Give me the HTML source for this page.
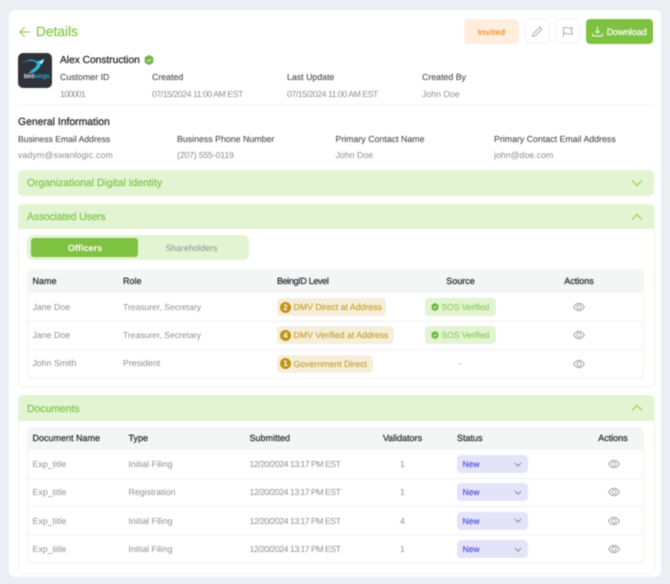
<!DOCTYPE html>
<html><head><meta charset="utf-8">
<style>
html,body{margin:0;padding:0;background:#ebeef3}
#p{position:relative;width:670px;height:584px;overflow:hidden;background:#ebeef3;font-family:"Liberation Sans",Arial,sans-serif;filter:blur(.4px);text-rendering:geometricPrecision}
#p div,#p span.a,#p svg.a{position:absolute}
.t{position:absolute;white-space:nowrap;line-height:14px;height:14px;font-size:8.8px;letter-spacing:0}
.l{color:#4a4e55;-webkit-text-stroke:.1px #4a4e55}
.v{color:#8c8f94}
.d{letter-spacing:-.45px;font-size:8.7px}
.h{color:#33363c;font-size:9px;-webkit-text-stroke:.3px #33363c}
.c{transform:translateX(-50%)}
.s{color:#7fc64a;font-size:10.4px;-webkit-text-stroke:.2px #7fc64a;margin-top:1px}
.pill{background:#f5eedb;border-radius:4px;height:18px}
.pt{color:#c59c22;font-size:8.75px;-webkit-text-stroke:.1px #c59c22}
.num{width:11px;height:11px;border-radius:50%;background:#bf9412;color:#fff;font-size:8px;font-weight:bold;text-align:center;line-height:11px}
.sos{background:#e3f4d3;border-radius:4px;height:18px;width:71px;left:425px}
.so{color:#8ccb58;letter-spacing:-.17px;font-size:8.7px;-webkit-text-stroke:.1px #8ccb58}
.sel{background:#e4e4f9;border-radius:4px;left:457px;width:71px;height:18px}
.new{color:#5b57e6;font-size:8.5px;-webkit-text-stroke:.25px #5b57e6}
.line{height:1px;background:#eff0f4}
</style></head><body>
<div id="p">
<svg width="0" height="0" style="position:absolute"><defs>
<symbol id="eye" viewBox="0 0 12 10"><path d="M.7 5C2 2.6 3.8 1.3 6 1.3S10 2.600 11.300 5C10 7.400 8.200 8.700 6 8.700S2 7.400.7 5Z" fill="none" stroke="#8f9297" stroke-width=".8"/><circle cx="6" cy="5" r="2" fill="none" stroke="#8f9297" stroke-width=".8"/></symbol>
<symbol id="chk" viewBox="0 0 10 10"><path d="M5 .4 8.900 2.600V7.400L5 9.600 1.100 7.400V2.600Z" fill="#6fb83f" stroke="#6fb83f" stroke-width=".8" stroke-linejoin="round"/><path d="M3.100 5.100 4.500 6.400 6.900 3.900" fill="none" stroke="#fff" stroke-width=".9"/></symbol>
<symbol id="sd" viewBox="0 0 10 6"><path d="M1 1 5 5 9 1" fill="none" stroke="#7c7f8a" stroke-width="1.100"/></symbol>
</defs></svg>

<div style="left:9px;top:10px;width:652px;height:567px;background:#fff;border-radius:6px"></div>

<!-- header -->
<svg class="a" style="left:19px;top:26px" width="12" height="12" viewBox="0 0 12 12"><path d="M11 6H1M5.500 1.500 1 6l4.500 4.500" fill="none" stroke="#86ca4f" stroke-width="1.100"/></svg>
<span class="t" style="left:36px;top:25px;font-size:13.7px;color:#82c845;-webkit-text-stroke:.2px #82c845">Details</span>

<div style="left:464px;top:19px;width:55px;height:25px;background:#ffeedd;border-radius:4px"></div>
<span class="t c" style="left:491.500px;top:25px;color:#f8922f;font-weight:bold;font-size:8.5px">Invited</span>
<div style="left:525px;top:19px;width:23px;height:23px;border:1px solid #f0f1f3;border-radius:4px"></div>
<svg class="a" style="left:531px;top:26px" width="12" height="12" viewBox="0 0 12 12"><path d="M1.500 10.500 2.200 7.800 8.300 1.700a1 1 0 0 1 1.400 0l.6.6a1 1 0 0 1 0 1.400L4.200 9.800Z" fill="none" stroke="#96999e" stroke-width=".8"/></svg>
<div style="left:555px;top:19px;width:23px;height:23px;border:1px solid #f0f1f3;border-radius:4px"></div>
<svg class="a" style="left:562px;top:26px" width="12" height="12" viewBox="0 0 12 12"><path d="M1.500 11V1.500C4 .5 6 3 10.500 1.800L9 5l1.500 3C6 9 4 6.500 1.500 7.500" fill="none" stroke="#96999e" stroke-width=".8"/></svg>
<div style="left:586px;top:19px;width:67px;height:25px;background:#7fc241;border-radius:4px"></div>
<svg class="a" style="left:592px;top:26px" width="11" height="11" viewBox="0 0 11 11"><path d="M5.500 .8V7M3.300 4.900 5.500 7.100 7.700 4.900M.8 7.500V10H10.200V7.500" fill="none" stroke="#fff" stroke-width=".9"/></svg>
<span class="t" style="left:606.700px;top:25px;color:#fff;font-size:9px;-webkit-text-stroke:.2px #fff">Download</span>

<!-- logo -->
<div style="left:18px;top:53px;width:34px;height:35px;background:#2f3339;border-radius:5px"></div>
<svg class="a" style="left:22px;top:58px" width="24" height="17" viewBox="0 0 24 17"><path d="M1 5.500C5 2.500 10 2 13.500 4 15 5 15.500 7 14 8.500 12.500 10.500 9.500 12 6.500 15.500 11 15.500 15 13 17.500 9.500 19 7 19 4.500 21.500 1.500 18 2 16 3 15 3.500 11 .5 5.500 1 1 5.500Z" fill="#25bde6"/><path d="M17.500 4.500 22.500 .8 20 6Z" fill="#e6f6fb"/></svg>
<span class="t" style="left:24px;top:70px;font-size:6px;color:#fff;-webkit-text-stroke:.1px #fff">bird<span style="color:#25bde6;-webkit-text-stroke:.1px #25bde6">wings</span></span>

<span class="t" style="left:60px;top:54px;font-size:10.200px;color:#2d3036;-webkit-text-stroke:.3px #2d3036">Alex Construction</span>
<svg class="a" style="left:144px;top:55px" width="10" height="10"><use href="#chk"/></svg>

<span class="t l" style="left:60px;top:70px">Customer ID</span>
<span class="t l" style="left:152px;top:70px">Created</span>
<span class="t l" style="left:287px;top:70px">Last Update</span>
<span class="t l" style="left:422px;top:70px">Created By</span>
<span class="t v" style="left:60px;top:87px;letter-spacing:-.7px">100001</span>
<span class="t v d" style="left:152px;top:87px">07/15/2024 11:00 AM EST</span>
<span class="t v d" style="left:287px;top:87px">07/15/2024 11:00 AM EST</span>
<span class="t v" style="left:422px;top:87px">John Doe</span>
<div class="line" style="left:18px;top:105px;width:635px"></div>

<span class="t" style="left:18px;top:116px;font-size:10.400px;color:#2d3036;-webkit-text-stroke:.3px #2d3036">General Information</span>
<span class="t l" style="left:18px;top:132px;font-size:8.6px">Business Email Address</span>
<span class="t l" style="left:177px;top:132px">Business Phone Number</span>
<span class="t l" style="left:335.500px;top:132px">Primary Contact Name</span>
<span class="t l" style="left:494px;top:132px">Primary Contact Email Address</span>
<span class="t v" style="left:18px;top:148px;letter-spacing:.12px">vadym@swanlogic.com</span>
<span class="t v" style="left:177px;top:148px;letter-spacing:-.2px">(207) 555-0119</span>
<span class="t v" style="left:335.500px;top:148px">John Doe</span>
<span class="t v" style="left:494px;top:148px">john@doe.com</span>

<!-- org -->
<div style="left:17.500px;top:170px;width:636px;height:26px;background:#e3f4d3;border-radius:5px"></div>
<span class="t s" style="left:27px;top:176px">Organizational Digital Identity</span>
<svg class="a" style="left:631px;top:179px" width="12" height="8" viewBox="0 0 12 8"><path d="M1 1.500 6 6.500 11 1.500" fill="none" stroke="#86ca4f" stroke-width="1"/></svg>

<!-- associated -->
<div style="left:17.500px;top:204px;width:635px;height:182px;border:1px solid #eff6e7;border-radius:5px"></div>
<div style="left:17.500px;top:204px;width:636px;height:25px;background:#e3f4d3;border-radius:5px 5px 0 0"></div>
<span class="t s" style="left:27px;top:210px;letter-spacing:-.15px">Associated Users</span>
<svg class="a" style="left:631px;top:213px" width="12" height="8" viewBox="0 0 12 8"><path d="M1 6.500 6 1.500 11 6.500" fill="none" stroke="#86ca4f" stroke-width="1"/></svg>
<div style="left:27px;top:235px;width:222px;height:25px;background:#e3f4d3;border-radius:6px"></div>
<div style="left:30.500px;top:238px;width:107.500px;height:19px;background:#7fc241;border-radius:3px"></div>
<span class="t c" style="left:85px;top:240.500px;color:#fff;font-weight:bold;font-size:9.100px">Officers</span>
<span class="t c" style="left:191.500px;top:240.500px;color:#8b8f8e;font-size:8.750px">Shareholders</span>

<div style="left:27px;top:269px;width:615px;height:107.500px;border:1px solid #f0f1f5;border-radius:6px"></div>
<div style="left:27px;top:269px;width:617px;height:24px;background:#f4f6f6;border-radius:6px 6px 0 0"></div>
<div class="line" style="left:28px;top:321px;width:615px"></div>
<div class="line" style="left:28px;top:349px;width:615px"></div>
<span class="t h" style="left:32.500px;top:274px">Name</span>
<span class="t h" style="left:123px;top:274px">Role</span>
<span class="t h" style="left:277px;top:274px;letter-spacing:-.35px">BeingID Level</span>
<span class="t h c" style="left:460.500px;top:274px">Source</span>
<span class="t h c" style="left:579px;top:274px">Actions</span>

<span class="t v" style="left:32.500px;top:300px">Jane Doe</span>
<span class="t v" style="left:123px;top:300px;font-size:8.6px">Treasurer, Secretary</span>
<div class="pill" style="left:277px;top:298px;width:108.500px"></div>
<div class="num" style="left:280px;top:301.500px">2</div>
<span class="t pt" style="left:293.500px;top:300px">DMV Direct at Address</span>
<div class="sos" style="top:298px"></div>
<svg class="a" style="left:431px;top:303px" width="8" height="8"><use href="#chk"/></svg>
<span class="t so" style="left:441.500px;top:300px">SOS Verified</span>
<svg class="a" style="left:573px;top:302px" width="12" height="10"><use href="#eye"/></svg>

<span class="t v" style="left:32.500px;top:328px">Jane Doe</span>
<span class="t v" style="left:123px;top:328px;font-size:8.6px">Treasurer, Secretary</span>
<div class="pill" style="left:277px;top:326px;width:116.500px"></div>
<div class="num" style="left:280px;top:329.500px">4</div>
<span class="t pt" style="left:293.500px;top:328px">DMV Verified at Address</span>
<div class="sos" style="top:326px"></div>
<svg class="a" style="left:431px;top:331px" width="8" height="8"><use href="#chk"/></svg>
<span class="t so" style="left:441.500px;top:328px">SOS Verified</span>
<svg class="a" style="left:573px;top:330px" width="12" height="10"><use href="#eye"/></svg>

<span class="t v" style="left:32.500px;top:356px">John Smith</span>
<span class="t v" style="left:123px;top:356px">President</span>
<div class="pill" style="left:277px;top:355px;width:96px"></div>
<div class="num" style="left:280px;top:358px">1</div>
<span class="t pt" style="left:293.500px;top:356.500px">Government Direct</span>
<span class="t v c" style="left:460.500px;top:356px">-</span>
<svg class="a" style="left:573px;top:358.500px" width="12" height="10"><use href="#eye"/></svg>

<!-- documents -->
<div style="left:17.500px;top:395px;width:635px;height:177px;border:1px solid #eff6e7;border-radius:5px"></div>
<div style="left:17.500px;top:395px;width:636px;height:26px;background:#e3f4d3;border-radius:5px 5px 0 0"></div>
<span class="t s" style="left:27px;top:401.500px">Documents</span>
<svg class="a" style="left:631px;top:404px" width="12" height="8" viewBox="0 0 12 8"><path d="M1 6.500 6 1.500 11 6.500" fill="none" stroke="#86ca4f" stroke-width="1"/></svg>

<div style="left:27px;top:426.500px;width:615px;height:135.500px;border:1px solid #f0f1f5;border-radius:6px"></div>
<div style="left:27px;top:426.500px;width:617px;height:23.500px;background:#f4f6f6;border-radius:6px 6px 0 0"></div>
<div class="line" style="left:28px;top:478px;width:615px"></div>
<div class="line" style="left:28px;top:506px;width:615px"></div>
<div class="line" style="left:28px;top:534px;width:615px"></div>
<span class="t h" style="left:32.500px;top:431px">Document Name</span>
<span class="t h" style="left:128.500px;top:431px">Type</span>
<span class="t h" style="left:249.500px;top:431px">Submitted</span>
<span class="t h c" style="left:402.500px;top:431px">Validators</span>
<span class="t h" style="left:457px;top:431px">Status</span>
<span class="t h c" style="left:613px;top:431px">Actions</span>

<span class="t v" style="left:32.500px;top:457px">Exp_title</span><span class="t v" style="left:128.500px;top:457px">Initial Filing</span><span class="t v d" style="left:249.500px;top:457px;letter-spacing:-.5px">12/20/2024 13:17 PM EST</span><span class="t v c" style="left:402.500px;top:457px">1</span>
<div class="sel" style="top:455px"></div><span class="t new" style="left:462.500px;top:457px">New</span><svg class="a" style="left:514px;top:461.500px" width="8" height="5"><use href="#sd"/></svg><svg class="a" style="left:607.500px;top:459px" width="12" height="10"><use href="#eye"/></svg>

<span class="t v" style="left:32.500px;top:485px">Exp_title</span><span class="t v" style="left:128.500px;top:485px">Registration</span><span class="t v d" style="left:249.500px;top:485px;letter-spacing:-.5px">12/20/2024 13:17 PM EST</span><span class="t v c" style="left:402.500px;top:485px">1</span>
<div class="sel" style="top:483px"></div><span class="t new" style="left:462.500px;top:485px">New</span><svg class="a" style="left:514px;top:490px" width="8" height="5"><use href="#sd"/></svg><svg class="a" style="left:607.500px;top:487px" width="12" height="10"><use href="#eye"/></svg>

<span class="t v" style="left:32.500px;top:513.500px">Exp_title</span><span class="t v" style="left:128.500px;top:513.500px">Initial Filing</span><span class="t v d" style="left:249.500px;top:513.500px;letter-spacing:-.5px">12/20/2024 13:17 PM EST</span><span class="t v c" style="left:402.500px;top:513.500px">4</span>
<div class="sel" style="top:511.500px"></div><span class="t new" style="left:462.500px;top:513.500px">New</span><svg class="a" style="left:514px;top:518px" width="8" height="5"><use href="#sd"/></svg><svg class="a" style="left:607.500px;top:515.500px" width="12" height="10"><use href="#eye"/></svg>

<span class="t v" style="left:32.500px;top:542px">Exp_title</span><span class="t v" style="left:128.500px;top:542px">Initial Filing</span><span class="t v d" style="left:249.500px;top:542px;letter-spacing:-.5px">12/20/2024 13:17 PM EST</span><span class="t v c" style="left:402.500px;top:542px">1</span>
<div class="sel" style="top:540px"></div><span class="t new" style="left:462.500px;top:542px">New</span><svg class="a" style="left:514px;top:546.500px" width="8" height="5"><use href="#sd"/></svg><svg class="a" style="left:607.500px;top:544px" width="12" height="10"><use href="#eye"/></svg>
</div>
</body></html>
